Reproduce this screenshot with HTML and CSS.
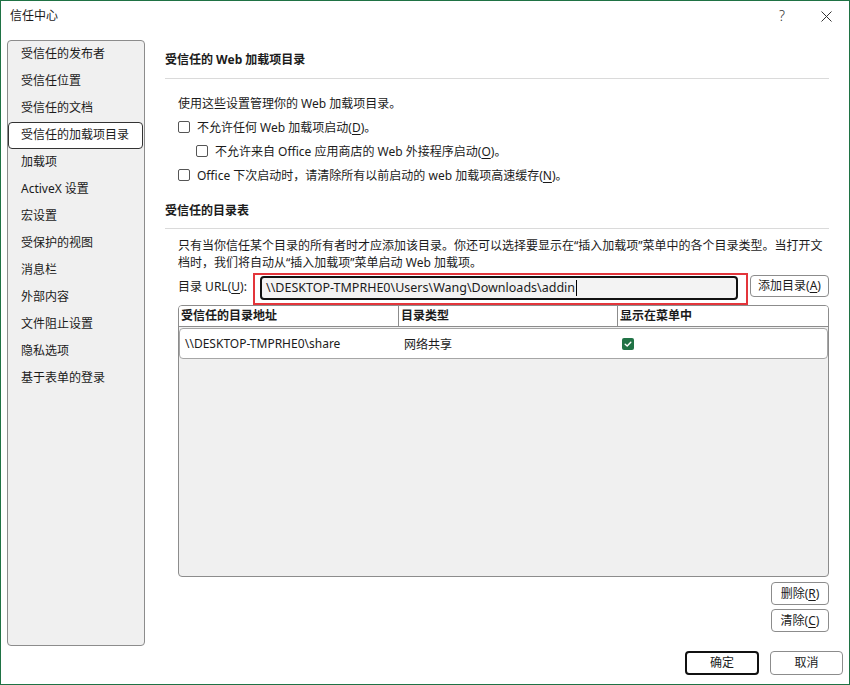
FILE: index.html
```html
<!DOCTYPE html>
<html lang="zh-CN">
<head>
<meta charset="utf-8">
<title>信任中心</title>
<link rel="stylesheet" href="styles.css">
</head>
<body>
<div class="window">
  <div class="titlebar">
    <span class="title">信任中心</span>
    <span class="help">?</span>
    <span class="close"><svg width="11" height="11" viewBox="0 0 11 11"><path d="M0.5 0.5 L10.5 10.5 M10.5 0.5 L0.5 10.5" stroke="#333" stroke-width="1" fill="none"/></svg></span>
  </div>
  <div class="main">
    <nav class="sidebar">
      <div class="nav-item">受信任的发布者</div>
      <div class="nav-item">受信任位置</div>
      <div class="nav-item">受信任的文档</div>
      <div class="nav-item active">受信任的加载项目录</div>
      <div class="nav-item">加载项</div>
      <div class="nav-item">ActiveX 设置</div>
      <div class="nav-item">宏设置</div>
      <div class="nav-item">受保护的视图</div>
      <div class="nav-item">消息栏</div>
      <div class="nav-item">外部内容</div>
      <div class="nav-item">文件阻止设置</div>
      <div class="nav-item">隐私选项</div>
      <div class="nav-item">基于表单的登录</div>
    </nav>
    <section class="content">
      <h2 class="section-head">受信任的 Web 加载项目录</h2>
      <div class="group">
        <div class="row">使用这些设置管理你的 Web 加载项目录。</div>
        <div class="row"><span class="box"></span>不允许任何 Web 加载项启动(<u>D</u>)。</div>
        <div class="row indent"><span class="box"></span>不允许来自 Office 应用商店的 Web 外接程序启动(<u>O</u>)。</div>
        <div class="row"><span class="box"></span>Office 下次启动时，请清除所有以前启动的 web 加载项高速缓存(<u>N</u>)。</div>
      </div>
      <h2 class="section-head second">受信任的目录表</h2>
      <div class="group">
        <p class="desc"><span class="line">只有当你信任某个目录的所有者时才应添加该目录。你还可以选择要显示在“插入加载项”菜单中的各个目录类型。当打开文</span><span class="line">档时，我们将自动从“插入加载项”菜单启动 Web 加载项。</span></p>
        <div class="url-row">
          <span class="url-label">目录 URL(<u>U</u>):</span>
          <div class="highlight">
            <div class="url-input">\\DESKTOP-TMPRHE0\Users\Wang\Downloads\addin<span class="caret"></span></div>
          </div>
          <button class="btn add-btn">添加目录(<u>A</u>)</button>
        </div>
        <div class="table">
          <div class="thead">
            <div class="th">受信任的目录地址</div>
            <div class="th">目录类型</div>
            <div class="th last">显示在菜单中</div>
          </div>
          <div class="trow">
            <div class="td c1">\\DESKTOP-TMPRHE0\share</div>
            <div class="td c2">网络共享</div>
            <div class="td c3"><span class="checked"><svg width="12" height="12" viewBox="0 0 12 12"><path d="M3.2 6.2 L5.2 8 L8.8 4.2" stroke="#fff" stroke-width="1.4" fill="none" stroke-linecap="round" stroke-linejoin="round"/></svg></span></div>
          </div>
        </div>
        <div class="side-buttons">
          <button class="btn small-btn">删除(<u>R</u>)</button>
          <button class="btn small-btn">清除(<u>C</u>)</button>
        </div>
      </div>
    </section>
  </div>
  <div class="footer">
    <button class="btn ok">确定</button>
    <button class="btn cancel">取消</button>
  </div>
</div>
</body>
</html>
```
FILE: styles.css
```css
html, body {
  margin: 0;
  padding: 0;
  background: #fff;
}

.window {
  width: 850px;
  height: 685px;
  box-sizing: border-box;
  border: 1px solid #1f7244;
  background: #fff;
  display: flex;
  flex-direction: column;
  font-family: "Noto Sans", "Noto Sans CJK SC", sans-serif;
  font-size: 12px;
  color: #1b1b1b;
  overflow: hidden;
}

.titlebar {
  height: 39px;
  box-sizing: border-box;
  display: flex;
  align-items: flex-start;
  padding: 7px 17px 0 9px;
  line-height: 16px;
}

.title {
  flex: 1;
}

.help {
  font-size: 14px;
  font-weight: 300;
  color: #333;
  width: 10px;
  text-align: center;
  margin-right: 34px;
}

.close {
  width: 11px;
  height: 16px;
  display: flex;
  align-items: center;
}

.main {
  display: flex;
  height: 606px;
  padding-left: 6px;
}

.sidebar {
  width: 138px;
  box-sizing: border-box;
  border: 1px solid #8c8c8c;
  border-radius: 4px;
  background: #f0f0f0;
}

.nav-item {
  height: 27px;
  line-height: 26px;
  padding-left: 13px;
  margin-right: 1px;
  white-space: nowrap;
}

.nav-item.active {
  box-sizing: border-box;
  background: #fff;
  border: 1px solid #333;
  border-radius: 4px;
  line-height: 24px;
  padding-left: 12px;
}

.content {
  margin-left: 20px;
  width: 664px;
}

.section-head {
  margin: 10px 0 0;
  font-size: 12px;
  font-weight: bold;
  line-height: 20px;
  padding-bottom: 8px;
  border-bottom: 1px solid #dadada;
}

.section-head.second {
  margin-top: 14px;
  padding-bottom: 7px;
}

.group {
  padding-left: 13px;
  margin-top: 12px;
}

.section-head.second + .group {
  margin-top: 0;
}

.row {
  height: 24px;
  display: flex;
  align-items: center;
  white-space: nowrap;
}

.row.indent {
  padding-left: 18px;
}

.box {
  width: 12px;
  height: 12px;
  box-sizing: border-box;
  border: 1px solid #555;
  border-radius: 2px;
  background: #fff;
  margin-right: 7px;
  flex: none;
}

u {
  text-decoration: underline;
  text-underline-offset: 2px;
}

.desc {
  margin: 8px 0 0;
  line-height: 17px;
}

.desc .line {
  display: block;
  white-space: nowrap;
}

.url-row {
  margin-top: 2px;
  height: 32px;
  display: flex;
  align-items: center;
}

.url-label {
  width: 75px;
  flex: none;
  white-space: nowrap;
  margin-top: -6px;
}

.highlight {
  width: 495px;
  height: 32px;
  box-sizing: border-box;
  border: 2px solid #e3353b;
  padding: 1px 8px 3px 5px;
  flex: none;
}

.url-input {
  height: 24px;
  box-sizing: border-box;
  border: 2px solid #111;
  border-radius: 4px;
  background: #f3f3f3;
  padding-left: 4px;
  font-size: 12.5px;
  line-height: 20px;
  white-space: nowrap;
  display: flex;
  align-items: center;
}

.caret {
  display: inline-block;
  width: 1px;
  height: 16px;
  background: #000;
  margin-left: 1px;
}

.btn {
  font-family: inherit;
  font-size: 12px;
  color: #1b1b1b;
  background: #fff;
  border: 1px solid #8c8c8c;
  border-radius: 4px;
  padding: 0;
  box-sizing: border-box;
  line-height: 1;
}

.add-btn {
  width: 79px;
  height: 22px;
  margin-left: 2px;
  align-self: flex-start;
  margin-top: 2px;
}

.table {
  width: 651px;
  height: 272px;
  box-sizing: border-box;
  border: 1px solid #8c8c8c;
  border-radius: 4px;
  background: #f0f0f0;
  overflow: hidden;
}

.thead {
  display: grid;
  grid-template-columns: 220px 219px 1fr;
  height: 21px;
  box-sizing: border-box;
  background: #fff;
  border-bottom: 1px solid #8c8c8c;
}

.th {
  border-right: 1px solid #8c8c8c;
  padding-left: 2px;
  line-height: 20px;
  font-weight: bold;
  white-space: nowrap;
}

.th.last {
  border-right: none;
}

.trow {
  margin-top: 1px;
  height: 31px;
  box-sizing: border-box;
  border: 1px solid #a6a6a6;
  border-radius: 4px;
  background: #fff;
  display: grid;
  grid-template-columns: 219px 219px 1fr;
  align-items: center;
}

.td {
  white-space: nowrap;
}

.td.c1 {
  padding-left: 5px;
}

.td.c2 {
  padding-left: 5px;
}

.td.c3 {
  padding-left: 4px;
  display: flex;
}

.checked {
  width: 12px;
  height: 12px;
  background: #217346;
  border-radius: 2px;
  display: flex;
}

.side-buttons {
  display: flex;
  flex-direction: column;
  align-items: flex-end;
  gap: 4px;
  margin-top: 5px;
  width: 651px;
}

.small-btn {
  width: 58px;
  height: 23px;
}

.footer {
  display: flex;
  justify-content: flex-end;
  gap: 11px;
  padding-right: 6px;
  margin-top: 5px;
}

.ok {
  width: 74px;
  height: 24px;
  border: 2px solid #111;
}

.cancel {
  width: 73px;
  height: 24px;
}
```
